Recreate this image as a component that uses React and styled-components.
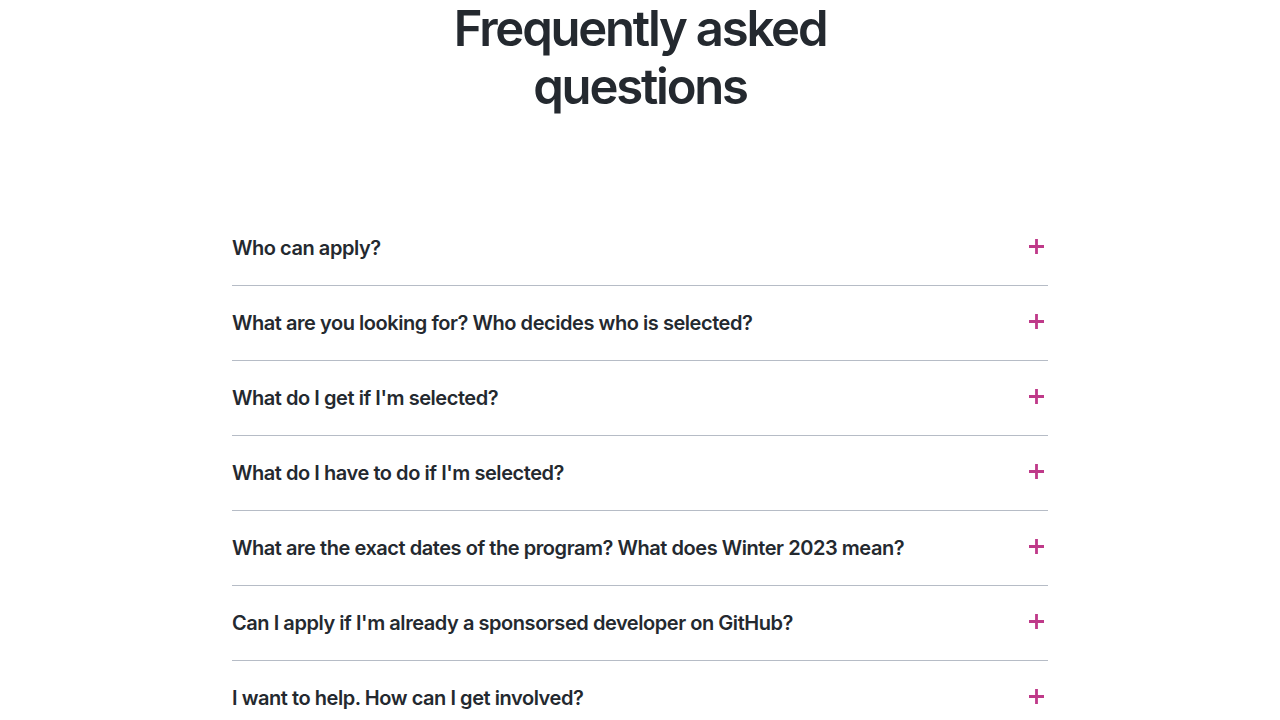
import React from 'react';
import styled, { createGlobalStyle } from 'styled-components';

const GlobalStyle = createGlobalStyle`
  html, body {
    margin: 0;
    padding: 0;
    background: #ffffff;
  }
  body {
    font-family: Inter, "Noto Sans", "Liberation Sans", sans-serif;
    color: #24292f;
  }
`;

const QUESTIONS = [
  'Who can apply?',
  'What are you looking for? Who decides who is selected?',
  "What do I get if I'm selected?",
  "What do I have to do if I'm selected?",
  'What are the exact dates of the program? What does Winter 2023 mean?',
  "Can I apply if I'm already a sponsorsed developer on GitHub?",
  'I want to help. How can I get involved?',
];

const Page = styled.main`
  display: flex;
  flex-direction: column;
  align-items: center;
`;

const Title = styled.h2`
  margin: 0;
  width: 420px;
  text-align: center;
  font-size: 49px;
  line-height: 58px;
  font-weight: 600;
  letter-spacing: -2.2px;
  color: #24292f;
`;

const List = styled.ul`
  list-style: none;
  margin: 95px 0 0;
  padding: 0;
  width: 816px;
`;

const Item = styled.li`
  border-bottom: 1px solid #b6bcc6;
`;

const Question = styled.button`
  display: flex;
  align-items: center;
  justify-content: space-between;
  width: 100%;
  height: 74px;
  padding: 0;
  border: 0;
  background: none;
  font-family: inherit;
  font-size: 20px;
  font-weight: 600;
  letter-spacing: -0.45px;
  color: #24292f;
  text-align: left;
  cursor: pointer;
`;

const Plus = styled.svg`
  width: 17px;
  height: 17px;
  margin-right: 3px;
  margin-top: -3px;
  flex-shrink: 0;
`;

function PlusIcon() {
  return (
    <Plus viewBox="0 0 17 17" fill="none">
      <path d="M8.5 1v15M1 8.5h15" stroke="#bf3989" strokeWidth="2.8" />
    </Plus>
  );
}

export default function App() {
  return (
    <Page>
      <GlobalStyle />
      <Title>Frequently asked questions</Title>
      <List>
        {QUESTIONS.map(q => (
          <Item key={q}>
            <Question>
              <span>{q}</span>
              <PlusIcon />
            </Question>
          </Item>
        ))}
      </List>
    </Page>
  );
}
